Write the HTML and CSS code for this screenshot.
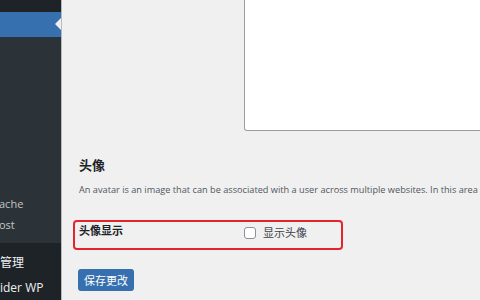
FILE: index.html
```html
<!DOCTYPE html>
<html lang="zh-CN">
<head>
<meta charset="utf-8">
<title>个人资料</title>
<link rel="stylesheet" href="styles.css">
</head>
<body>
<div class="layout">
  <nav class="sidebar">
    <div class="topstrip"></div>
    <div class="menu-active"><span class="notch"></span></div>
    <ul class="submenu">
      <li>ache</li>
      <li>ost</li>
    </ul>
    <ul class="mainmenu">
      <li>管理</li>
      <li>ider WP</li>
    </ul>
  </nav>
  <main class="content">
    <div class="bio-row">
      <div class="textarea"></div>
    </div>
    <h2 class="section-title">头像</h2>
    <p class="description">An avatar is an image that can be associated with a user across multiple websites. In this area</p>
    <div class="form-row highlight">
      <div class="row-label">头像显示</div>
      <label class="row-field"><span class="checkbox"></span><span class="check-text">显示头像</span></label>
    </div>
    <div class="submit-row">
      <button class="button-primary" type="button">保存更改</button>
    </div>
  </main>
</div>
</body>
</html>
```
FILE: styles.css
```css
html, body {
  margin: 0;
  padding: 0;
  width: 480px;
  height: 300px;
  overflow: hidden;
  background: #f0f0f0;
  font-family: "Open Sans", "Noto Sans", "Noto Sans CJK SC", sans-serif;
}
.layout {
  display: flex;
  height: 300px;
}
.sidebar {
  width: 61px;
  flex: none;
  background: #1d2327;
  border-right: 1px solid #b9b9bb;
  display: flex;
  flex-direction: column;
  overflow: hidden;
  white-space: nowrap;
}
.topstrip {
  height: 12px;
  background: #1d2327;
}
.menu-active {
  height: 25px;
  background: #3670ae;
  position: relative;
}
.notch {
  position: absolute;
  right: 0;
  top: 6px;
  width: 0;
  height: 0;
  border-top: 6px solid transparent;
  border-bottom: 6px solid transparent;
  border-right: 6px solid #f0f0f0;
}
.submenu {
  list-style: none;
  margin: 0;
  padding: 156px 0 8px 0;
  background: #2c3338;
}
.submenu li {
  height: 21px;
  line-height: 21px;
  font-size: 11px;
  color: #c3c4c7;
  margin-left: -1px;
}
.mainmenu {
  list-style: none;
  margin: 0;
  padding: 7px 0 0 0;
  flex: 1;
  background: #1d2327;
}
.mainmenu li {
  height: 25px;
  line-height: 25px;
  font-size: 12px;
  color: #f0f0f1;
}
.content {
  flex: 1;
  min-width: 0;
  padding-left: 17px;
  overflow: hidden;
}
.bio-row {
  padding-left: 165px;
}
.textarea {
  width: 300px;
  height: 130px;
  background: #fff;
  border: 1px solid #9a9ca0;
  border-top: none;
  border-radius: 0 0 0 3px;
}
.section-title {
  margin: 24px 0 0 0;
  font-size: 13px;
  line-height: 20px;
  font-weight: 700;
  color: #1d2327;
}
.description {
  margin: 7px 0 0 0;
  font-size: 9.2px;
  line-height: 16px;
  color: #50575e;
  white-space: nowrap;
}
.form-row {
  margin: 22px 0 0 -6px;
  width: 266px;
  height: 26px;
  border: 2px solid #e0262b;
  border-radius: 4px;
  display: flex;
  align-items: flex-start;
}
.row-label {
  width: 165px;
  padding: 1px 0 0 4px;
  font-size: 11px;
  line-height: 16px;
  font-weight: 700;
  color: #1d2327;
}
.row-field {
  display: flex;
  align-items: center;
  gap: 7px;
  padding-top: 5px;
}
.checkbox {
  width: 10px;
  height: 10px;
  border: 1px solid #8c8f94;
  border-radius: 3px;
  background: #fff;
}
.check-text {
  font-size: 11px;
  line-height: 12px;
  color: #3c434a;
}
.submit-row {
  margin-top: 18px;
}
.button-primary {
  margin: 0 0 0 -1px;
  width: 56px;
  height: 22px;
  padding: 0;
  border: none;
  border-radius: 3px;
  background: #3670ae;
  color: #fff;
  font-family: "Noto Sans CJK SC", sans-serif;
  font-size: 11px;
  line-height: 22px;
}
```
